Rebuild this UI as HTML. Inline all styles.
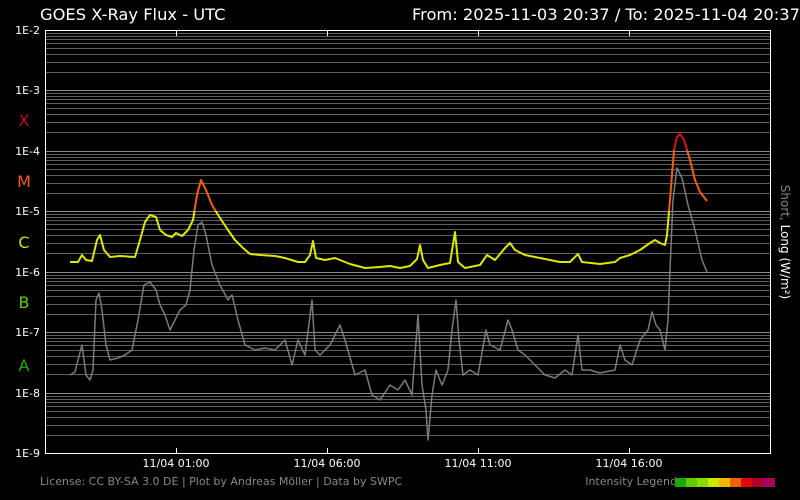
<!DOCTYPE html>
<html><head><meta charset="utf-8"><style>
html,body{margin:0;padding:0;background:#000;width:800px;height:500px;overflow:hidden}
svg{display:block;font-family:"DejaVu Sans","Liberation Sans",sans-serif}
</style></head><body>
<svg width="800" height="500" viewBox="0 0 800 500" xmlns="http://www.w3.org/2000/svg">
<defs>
<g id="dec" stroke="#5e5e5e" stroke-width="1">
<line x1="46" x2="770" y1="3.5" y2="3.5"/><line x1="46" x2="770" y1="6.5" y2="6.5"/><line x1="46" x2="770" y1="9.5" y2="9.5"/><line x1="46" x2="770" y1="13.5" y2="13.5"/><line x1="46" x2="770" y1="18.5" y2="18.5"/><line x1="46" x2="770" y1="24.5" y2="24.5"/><line x1="46" x2="770" y1="32.5" y2="32.5"/><line x1="46" x2="770" y1="42.5" y2="42.5"/>
</g>
<clipPath id="cy"><rect x="0" y="211" width="800" height="300"/></clipPath>
<clipPath id="cm"><rect x="0" y="150" width="800" height="61"/></clipPath>
<clipPath id="cx"><rect x="0" y="0" width="800" height="150"/></clipPath>
</defs>
<rect width="800" height="500" fill="#000"/>
<use href="#dec" transform="translate(0,30)"/>
<use href="#dec" transform="translate(0,90)"/>
<use href="#dec" transform="translate(0,151)"/>
<use href="#dec" transform="translate(0,211)"/>
<use href="#dec" transform="translate(0,272)"/>
<use href="#dec" transform="translate(0,332)"/>
<use href="#dec" transform="translate(0,393)"/>
<g stroke="#8a8a8a" stroke-width="1">
<line x1="46" x2="770" y1="90.5" y2="90.5"/><line x1="46" x2="770" y1="151.5" y2="151.5"/><line x1="46" x2="770" y1="211.5" y2="211.5"/><line x1="46" x2="770" y1="272.5" y2="272.5"/><line x1="46" x2="770" y1="332.5" y2="332.5"/><line x1="46" x2="770" y1="393.5" y2="393.5"/>
</g>
<rect x="45.5" y="30.5" width="725" height="423" fill="none" stroke="#fff" stroke-width="1"/>
<g stroke="#fff" stroke-width="1">
<line x1="176.5" y1="30" x2="176.5" y2="36"/><line x1="327.5" y1="30" x2="327.5" y2="36"/><line x1="478.5" y1="30" x2="478.5" y2="36"/><line x1="629.5" y1="30" x2="629.5" y2="36"/>
<line x1="176.5" y1="448" x2="176.5" y2="453"/><line x1="327.5" y1="448" x2="327.5" y2="453"/><line x1="478.5" y1="448" x2="478.5" y2="453"/><line x1="629.5" y1="448" x2="629.5" y2="453"/>
</g>
<text x="40" y="20" fill="#fff" font-size="16.3">GOES X-Ray Flux - UTC</text>
<text x="800" y="20" fill="#fff" font-size="16.3" text-anchor="end">From: 2025-11-03 20:37  /  To: 2025-11-04 20:37</text>
<g fill="#fff" font-size="11" text-anchor="end">
<text x="40" y="34">1E-2</text><text x="40" y="94">1E-3</text><text x="40" y="155">1E-4</text><text x="40" y="215">1E-5</text><text x="40" y="276">1E-6</text><text x="40" y="336">1E-7</text><text x="40" y="397">1E-8</text><text x="40" y="457">1E-9</text>
</g>
<g font-size="16" text-anchor="middle">
<text x="24" y="126" fill="#c8001e">X</text><text x="24" y="187" fill="#f06010">M</text><text x="24" y="248" fill="#d0e000">C</text><text x="24" y="308" fill="#66cc00">B</text><text x="24" y="371" fill="#22aa00">A</text>
</g>
<g fill="#fff" font-size="11" text-anchor="middle">
<text x="176" y="467">11/04 01:00</text><text x="327" y="467">11/04 06:00</text><text x="478" y="467">11/04 11:00</text><text x="629" y="467">11/04 16:00</text>
</g>
<text transform="translate(781,242) rotate(90)" font-size="12" text-anchor="middle"><tspan fill="#888">Short, </tspan><tspan fill="#fff">Long (W/m²)</tspan></text>
<text x="40" y="485" fill="#888" font-size="11">License: CC BY-SA 3.0 DE | Plot by Andreas Möller | Data by SWPC</text>
<text x="677" y="485" fill="#888" font-size="11" text-anchor="end">Intensity Legend</text>
<g>
<rect x="675" y="478" width="12" height="9" fill="#1aaa0a"/><rect x="686" y="478" width="12" height="9" fill="#5ecc00"/><rect x="697" y="478" width="12" height="9" fill="#88dd00"/><rect x="708" y="478" width="12" height="9" fill="#ccea00"/><rect x="719" y="478" width="12" height="9" fill="#f0b800"/><rect x="730" y="478" width="12" height="9" fill="#ee6000"/><rect x="741" y="478" width="12" height="9" fill="#e00808"/><rect x="752" y="478" width="12" height="9" fill="#b00028"/><rect x="763" y="478" width="12" height="9" fill="#a80060"/>
</g>
<polyline fill="none" stroke="#7a7a7a" stroke-width="1.5" stroke-linejoin="round" points="70,375 75,372 78,360 82,345 86,375 90,380 93,370 96,300 99,293 102,310 106,345 110,360 118,358 125,355 132,350 138,320 144,285 150,282 156,290 160,305 165,315 170,330 175,320 180,310 186,305 190,290 194,250 198,225 202,222 206,235 212,265 220,285 228,300 232,295 238,320 245,345 255,350 265,348 275,350 285,340 292,365 298,340 305,355 312,300 315,350 320,355 330,345 340,325 345,340 355,375 365,370 372,395 380,400 390,385 398,390 405,380 412,395 418,315 422,385 426,410 428,440 432,395 436,370 442,385 448,370 452,330 456,300 459,340 463,375 470,370 478,375 486,330 490,345 500,350 508,320 512,330 518,350 525,355 535,365 545,375 555,378 565,370 572,375 578,335 582,370 590,370 600,373 615,370 620,345 625,360 632,365 640,340 648,330 652,312 656,325 660,330 665,350 668,320 670,270 673,200 677,168 682,178 688,205 695,230 702,260 707,272"/>
<g fill="none" stroke-width="2" stroke-linejoin="round">
<polyline clip-path="url(#cy)" stroke="#dde800" points="70,262 78,262 82,255 86,260 92,261 97,240 100,235 104,250 110,257 120,256 135,257 140,240 145,222 150,215 156,217 160,230 166,235 172,237 176,233 182,236 188,230 193,220 197,195 201,180 206,190 212,205 220,218 228,230 235,240 243,248 250,254 260,255 275,256 285,258 298,262 305,262 310,255 313,241 316,258 325,260 335,258 350,264 365,268 380,267 390,266 400,268 410,266 417,259 420,245 423,260 428,268 440,265 450,263 455,232 458,262 465,268 480,265 487,255 495,260 505,248 510,243 515,250 525,255 540,258 560,262 570,262 578,254 582,262 600,264 615,262 620,258 630,255 640,250 650,243 655,240 660,243 665,245 667,235 670,200 672,175 674,150 677,137 680,134 684,140 690,160 695,180 700,192 707,201"/>
<polyline clip-path="url(#cm)" stroke="#f06010" points="70,262 78,262 82,255 86,260 92,261 97,240 100,235 104,250 110,257 120,256 135,257 140,240 145,222 150,215 156,217 160,230 166,235 172,237 176,233 182,236 188,230 193,220 197,195 201,180 206,190 212,205 220,218 228,230 235,240 243,248 250,254 260,255 275,256 285,258 298,262 305,262 310,255 313,241 316,258 325,260 335,258 350,264 365,268 380,267 390,266 400,268 410,266 417,259 420,245 423,260 428,268 440,265 450,263 455,232 458,262 465,268 480,265 487,255 495,260 505,248 510,243 515,250 525,255 540,258 560,262 570,262 578,254 582,262 600,264 615,262 620,258 630,255 640,250 650,243 655,240 660,243 665,245 667,235 670,200 672,175 674,150 677,137 680,134 684,140 690,160 695,180 700,192 707,201"/>
<polyline clip-path="url(#cx)" stroke="#d8101a" points="670,200 672,175 674,150 677,137 680,134 684,140 690,160 695,180"/>
</g>
</svg>
</body></html>
